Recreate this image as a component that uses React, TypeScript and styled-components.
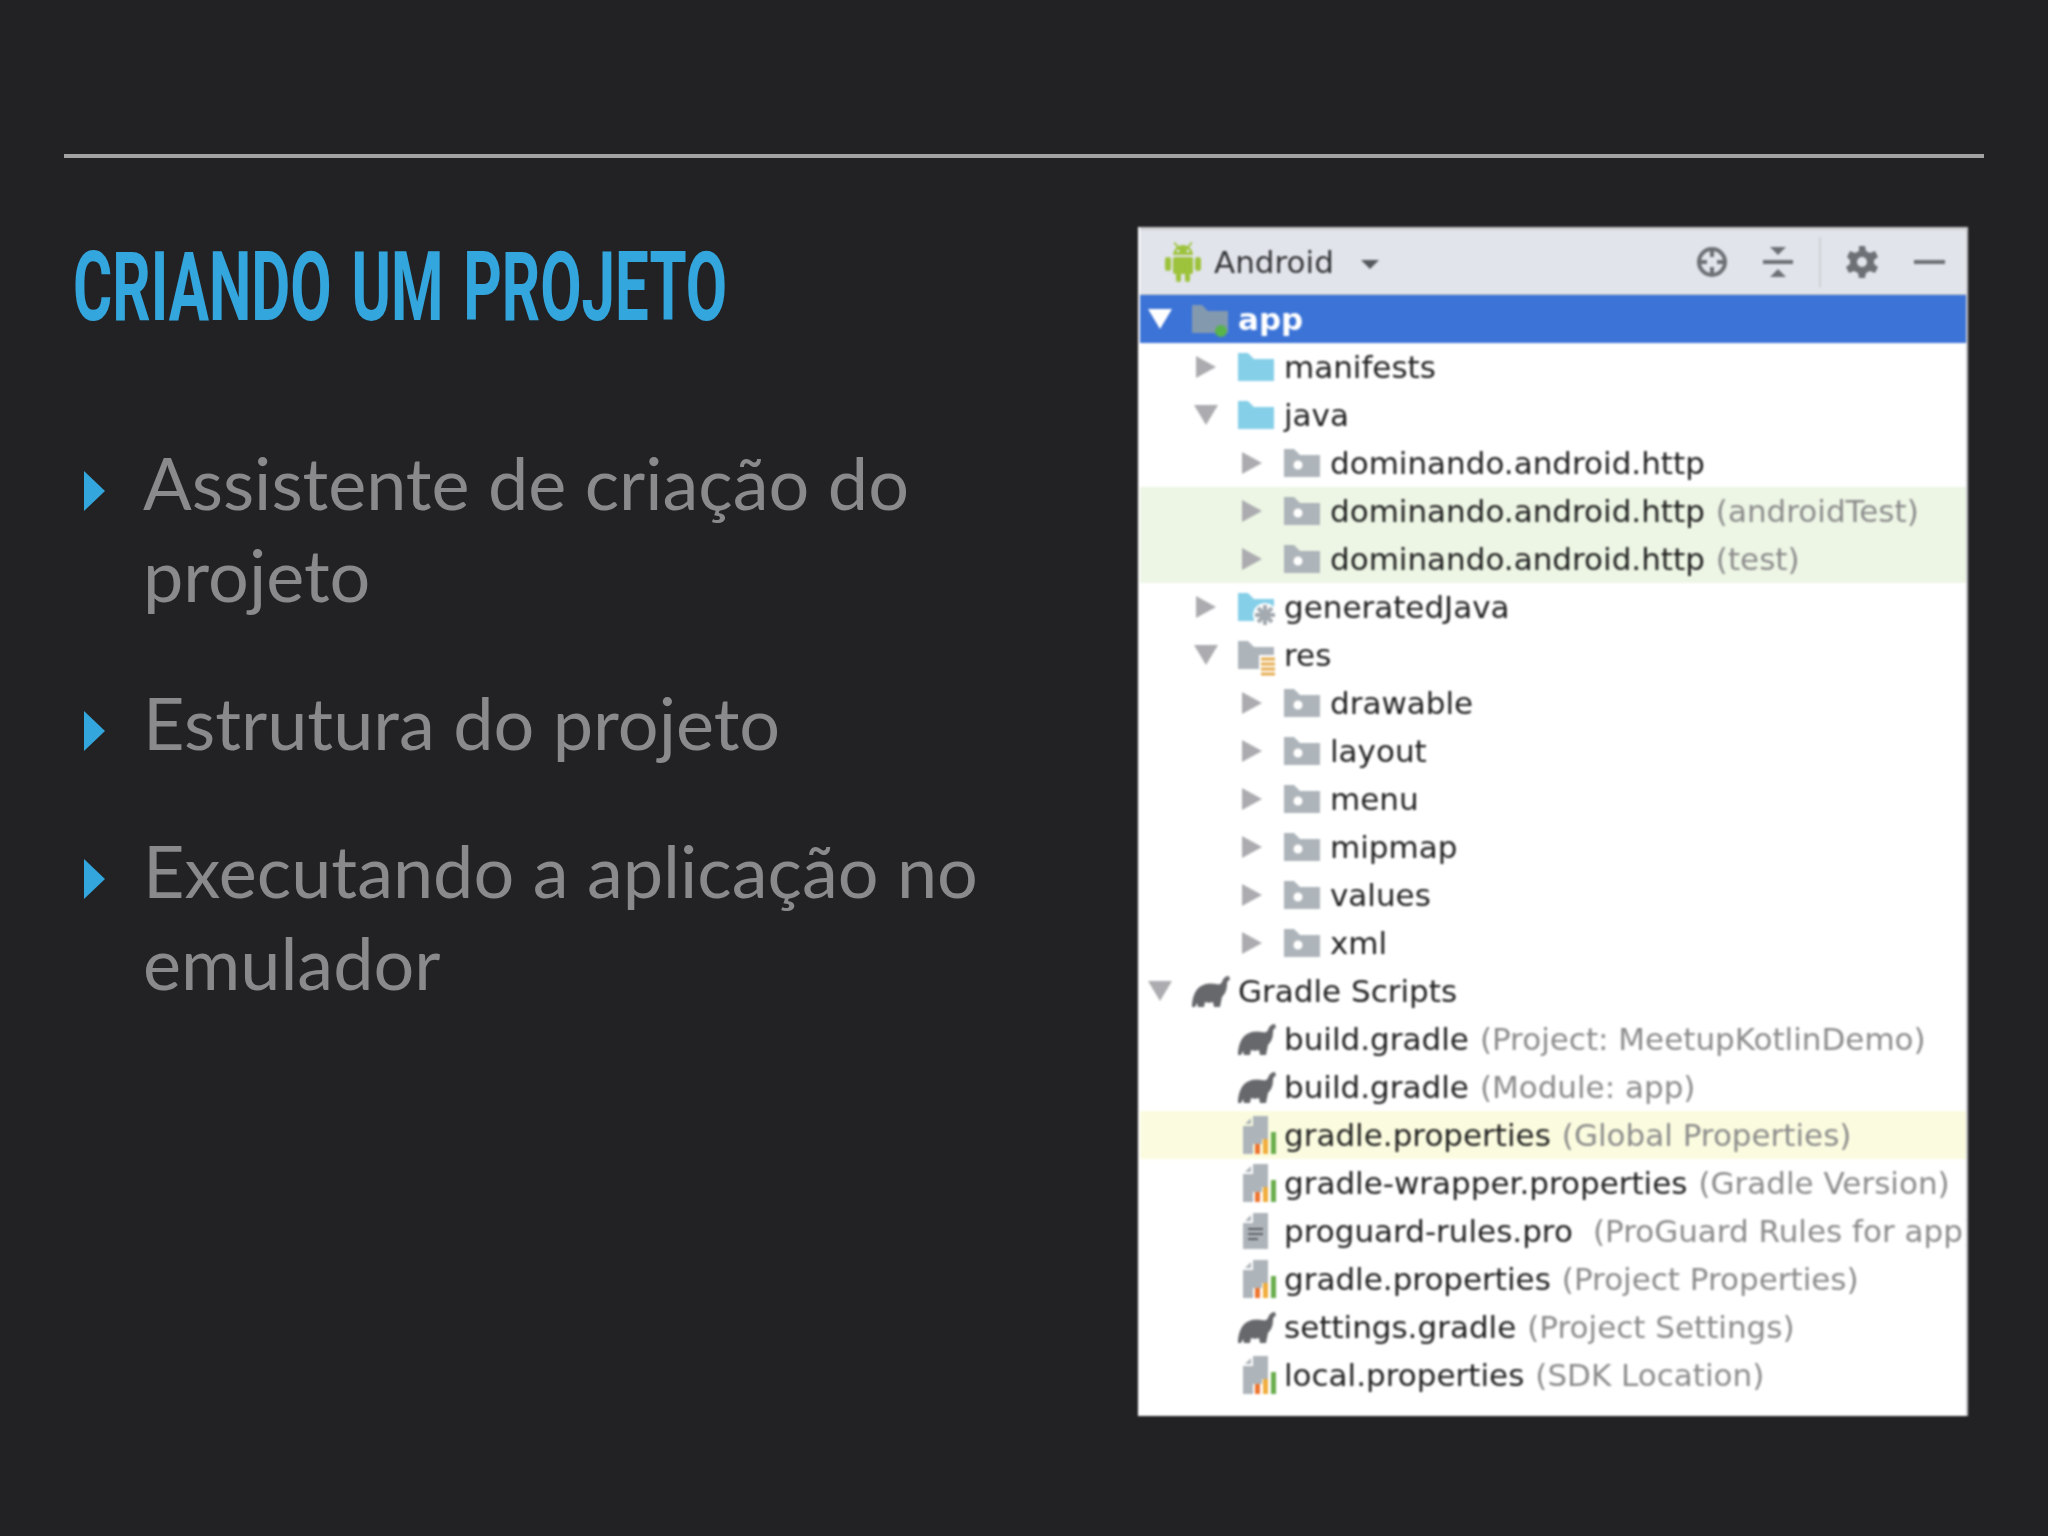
import React from 'react';
import styled, { createGlobalStyle } from 'styled-components';

const GlobalStyle = createGlobalStyle`
	html, body {
		margin: 0;
		background: #222224;
	}
`;

const Slide = styled.div`
	width: 2048px;
	height: 1536px;
	box-sizing: border-box;
	padding: 154px 64px 0;
	overflow: hidden;
	background: #222224;
`;
const Rule = styled.div`
	height: 4px;
	background: #a3a3a3;
`;
const Columns = styled.div`
	display: flex;
	justify-content: space-between;
	align-items: flex-start;
	margin-top: 69px;
	margin-right: 16px;
`;
const LeftColumn = styled.div`
	width: 1000px;
	padding-left: 9px;
`;
const Title = styled.h1`
	margin: 0;
	padding-top: 8px;
	font-family: 'Roboto', sans-serif;
	font-size: 97px;
	line-height: 104px;
	font-weight: 700;
	word-spacing: 8px;
	white-space: nowrap;
	color: #34a6de;
	transform: scaleX(0.618);
	transform-origin: left center;
`;
const List = styled.ul`
	list-style: none;
	margin: 97px 0 0;
	padding: 0;
	display: flex;
	flex-direction: column;
	gap: 56px;
`;
const Item = styled.li`
	display: flex;
	align-items: flex-start;
	font-family: 'Lato', sans-serif;
	font-size: 72px;
	line-height: 92px;
	color: #8a8a8c;
`;
const Bullet = styled.span`
	flex: none;
	width: 0;
	height: 0;
	margin: 35px 38px 0 11px;
	border-left: 21px solid #34a6de;
	border-top: 20px solid transparent;
	border-bottom: 20px solid transparent;
`;
const ItemText = styled.span`
	width: 860px;
`;

const Panel = styled.div`
	width: 830px;
	height: 1189px;
	box-sizing: border-box;
	padding-left: 2px;
	border-right: 2px solid #c8c8cc;
	background: #fff;
	overflow: hidden;
	font-family: 'DejaVu Sans', sans-serif;
	font-size: 31px;
	filter: blur(0.8px);
`;
const Toolbar = styled.div`
	display: flex;
	align-items: center;
	height: 68px;
	box-sizing: border-box;
	padding: 0 20px 0 25px;
	background: #e1e4ea;
	color: #333538;
	border-top: 3px solid #cdcdcf;
	border-bottom: 1px solid #c6c8cc;
`;
const ToolbarLabel = styled.span`
	margin-left: 13px;
`;
const Caret = styled.span`
	width: 0;
	height: 0;
	margin: 4px 0 0 27px;
	border-top: 9px solid #55585c;
	border-left: 9px solid transparent;
	border-right: 9px solid transparent;
`;
const Spacer = styled.div`
	flex: 1;
`;
const ToolIcon = styled.svg`
	flex: none;
	display: block;
	margin-left: ${(p) => p.$gap || 0}px;
`;
const Separator = styled.div`
	width: 2px;
	height: 50px;
	margin-left: 25px;
	background: #cfd1d5;
`;
const Row = styled.div`
	display: flex;
	align-items: center;
	height: 48px;
	padding-left: ${(p) => 3 + p.$level * 46}px;
	white-space: nowrap;
	overflow: hidden;
	color: ${(p) => (p.$tone === 'selected' ? '#fff' : '#222')};
	font-weight: ${(p) => (p.$tone === 'selected' ? 700 : 400)};
	background: ${(p) =>
		p.$tone === 'selected' ? '#3b73d7' : p.$tone === 'test' ? '#edf6e5' : p.$tone === 'global' ? '#fbfcdf' : 'transparent'};
`;
const ArrowSlot = styled.span`
	flex: none;
	width: 34px;
	height: 24px;
	margin-right: 15px;
	display: flex;
	align-items: center;
	justify-content: center;
`;
const ArrowRight = styled.span`
	width: 0;
	height: 0;
	border-left: 20px solid ${(p) => p.$color};
	border-top: 11px solid transparent;
	border-bottom: 11px solid transparent;
`;
const ArrowDown = styled.span`
	width: 0;
	height: 0;
	border-top: 20px solid ${(p) => p.$color};
	border-left: 12px solid transparent;
	border-right: 12px solid transparent;
`;
const IconSlot = styled.span`
	flex: none;
	width: 46px;
	height: 38px;
	display: flex;
	align-items: center;
`;
const Hint = styled.span`
	margin-left: ${(p) => p.$gap || 11}px;
	color: #8c8c8c;
`;
const Glyph = styled.svg`
	display: block;
	flex: none;
	overflow: visible;
	margin-left: ${(p) => p.$offset || 0}px;
`;

const AndroidIcon = () => (
	<Glyph width="36" height="40" viewBox="0 0 36 40">
		<g fill="#9dc33c">
			<path d="M8 13a10 10 0 0 1 20 0z" />
			<rect x="8" y="15" width="20" height="17" rx="2" />
			<rect x="0" y="15" width="6" height="14" rx="3" />
			<rect x="30" y="15" width="6" height="14" rx="3" />
			<rect x="11" y="30" width="5" height="10" rx="2" />
			<rect x="20" y="30" width="5" height="10" rx="2" />
			<path d="M10 0l4 5-1.5 1-4-5zM26 0l-4 5 1.5 1 4-5z" />
		</g>
		<circle cx="13" cy="9" r="1.5" fill="#e1e4ea" />
		<circle cx="23" cy="9" r="1.5" fill="#e1e4ea" />
	</Glyph>
);

const CrosshairIcon = () => (
	<ToolIcon width="32" height="32" viewBox="0 0 32 32">
		<circle cx="16" cy="16" r="13" fill="none" stroke="#6d7074" strokeWidth="4" />
		<path d="M16 3v8M16 21v8M3 16h8M21 16h8" stroke="#6d7074" strokeWidth="4" />
	</ToolIcon>
);
const CollapseIcon = () => (
	<ToolIcon $gap={34} width="32" height="32" viewBox="0 0 32 32">
		<path d="M8 1h16l-8 8zM8 31h16l-8-8z" fill="#6d7074" />
		<rect x="1" y="14" width="30" height="4" fill="#6d7074" />
	</ToolIcon>
);
const GearIcon = () => (
	<ToolIcon $gap={25} width="32" height="34" viewBox="0 0 32 34">
		<path
			d="M13 1h6l1 5 4 2 5-2 3 6-4 3v4l4 3-3 6-5-2-4 2-1 5h-6l-1-5-4-2-5 2-3-6 4-3v-4L1 12l3-6 5 2 4-2z"
			fill="#6d7074"
		/>
		<circle cx="16" cy="17" r="5" fill="#e1e4ea" />
	</ToolIcon>
);
const MinusIcon = () => (
	<ToolIcon $gap={36} width="32" height="6" viewBox="0 0 32 6">
		<rect y="1" width="31" height="4" fill="#6d7074" />
	</ToolIcon>
);

const FolderIcon = ({ color = '#85cfe8', children }: { color?: string; children?: React.ReactNode }) => (
	<Glyph width="36" height="28" viewBox="0 0 36 28">
		<path d="M0 0h10l6 6h20v22H0z" fill={color} />
		{children}
	</Glyph>
);

const ElephantIcon = () => (
	<Glyph width="38" height="31" viewBox="0 0 38 31">
		<path
			d="M0 31C0 24 2 14 9 10c5-3 10-3 15-2 3 1 5 0 6-2 1-3 3-6 7-6l1 4c-2 0-3 2-3 4 0 6-2 10-5 13l-2 10h-6l-1-5c-3 1-5 1-8 0l-1 5H6l-1-4-2 4z"
			fill="#66686b"
		/>
	</Glyph>
);

const PropsIcon = () => (
	<Glyph $offset={5} width="33" height="38" viewBox="0 0 33 38">
		<path d="M10 0h15v23h-6v5h-9v10H0V10h10z" fill="#adb4ba" />
		<path d="M8 2v6H2z" fill="#adb4ba" />
		<rect x="12" y="28" width="5" height="10" fill="#ee7430" />
		<rect x="20" y="23" width="5" height="15" fill="#f0ac3c" />
		<rect x="28" y="16" width="5" height="22" fill="#69ad4c" />
	</Glyph>
);

const TextFileIcon = () => (
	<Glyph $offset={5} width="25" height="36" viewBox="0 0 25 36">
		<path d="M10 0h15v36H0V10h10z" fill="#adb4ba" />
		<path d="M8 2v6H2z" fill="#adb4ba" />
		<path d="M5 16h15M5 21h15M5 26h10" stroke="#5c6066" strokeWidth="2" />
	</Glyph>
);

const icons = {
	module: (
		<FolderIcon color="#8399ae">
			<circle cx="29" cy="26" r="6" fill="#59b44c" />
		</FolderIcon>
	),
	blue: <FolderIcon />,
	generated: (
		<FolderIcon>
			<circle cx="27" cy="22" r="12" fill="#fff" />
			<path d="M27 12v20M17 22h20M20 15l14 14M34 15L20 29" stroke="#a3aab0" strokeWidth="4" />
		</FolderIcon>
	),
	res: (
		<FolderIcon color="#adb4ba">
			<rect x="21" y="14" width="17" height="20" fill="#fff" />
			<path d="M23 18h14M23 23h14M23 28h14M23 33h14" stroke="#e6ac50" strokeWidth="3" />
		</FolderIcon>
	),
	pkg: (
		<FolderIcon color="#adb4ba">
			<circle cx="14" cy="16" r="4.5" fill="#fff" />
		</FolderIcon>
	),
	gradle: <ElephantIcon />,
	props: <PropsIcon />,
	text: <TextFileIcon />,
};

type Entry = {
	level: number;
	arrow?: 'right' | 'down';
	icon: keyof typeof icons;
	name: string;
	hint?: string;
	hintGap?: number;
	tone?: 'selected' | 'test' | 'global';
};

const tree: Entry[] = [
	{ level: 0, arrow: 'down', icon: 'module', name: 'app', tone: 'selected' },
	{ level: 1, arrow: 'right', icon: 'blue', name: 'manifests' },
	{ level: 1, arrow: 'down', icon: 'blue', name: 'java' },
	{ level: 2, arrow: 'right', icon: 'pkg', name: 'dominando.android.http' },
	{ level: 2, arrow: 'right', icon: 'pkg', name: 'dominando.android.http', hint: '(androidTest)', tone: 'test' },
	{ level: 2, arrow: 'right', icon: 'pkg', name: 'dominando.android.http', hint: '(test)', tone: 'test' },
	{ level: 1, arrow: 'right', icon: 'generated', name: 'generatedJava' },
	{ level: 1, arrow: 'down', icon: 'res', name: 'res' },
	{ level: 2, arrow: 'right', icon: 'pkg', name: 'drawable' },
	{ level: 2, arrow: 'right', icon: 'pkg', name: 'layout' },
	{ level: 2, arrow: 'right', icon: 'pkg', name: 'menu' },
	{ level: 2, arrow: 'right', icon: 'pkg', name: 'mipmap' },
	{ level: 2, arrow: 'right', icon: 'pkg', name: 'values' },
	{ level: 2, arrow: 'right', icon: 'pkg', name: 'xml' },
	{ level: 0, arrow: 'down', icon: 'gradle', name: 'Gradle Scripts' },
	{ level: 1, icon: 'gradle', name: 'build.gradle', hint: '(Project: MeetupKotlinDemo)' },
	{ level: 1, icon: 'gradle', name: 'build.gradle', hint: '(Module: app)' },
	{ level: 1, icon: 'props', name: 'gradle.properties', hint: '(Global Properties)', tone: 'global' },
	{ level: 1, icon: 'props', name: 'gradle-wrapper.properties', hint: '(Gradle Version)' },
	{ level: 1, icon: 'text', name: 'proguard-rules.pro', hint: '(ProGuard Rules for app)', hintGap: 20 },
	{ level: 1, icon: 'props', name: 'gradle.properties', hint: '(Project Properties)' },
	{ level: 1, icon: 'gradle', name: 'settings.gradle', hint: '(Project Settings)' },
	{ level: 1, icon: 'props', name: 'local.properties', hint: '(SDK Location)' },
];

const TreeRow = ({ level, arrow, icon, name, hint, hintGap, tone }: Entry) => {
	const arrowColor = tone === 'selected' ? '#fff' : '#acacb0';
	return (
		<Row $level={level} $tone={tone}>
			<ArrowSlot>
				{arrow === 'right' && <ArrowRight $color={arrowColor} />}
				{arrow === 'down' && <ArrowDown $color={arrowColor} />}
			</ArrowSlot>
			<IconSlot>{icons[icon]}</IconSlot>
			{name}
			{hint && <Hint $gap={hintGap}>{hint}</Hint>}
		</Row>
	);
};

const App = () => {
	return (
		<Slide>
			<GlobalStyle />
			<Rule />
			<Columns>
				<LeftColumn>
					<Title>CRIANDO UM PROJETO</Title>
					<List>
						<Item>
							<Bullet />
							<ItemText>Assistente de criação do projeto</ItemText>
						</Item>
						<Item>
							<Bullet />
							<ItemText>Estrutura do projeto</ItemText>
						</Item>
						<Item>
							<Bullet />
							<ItemText>Executando a aplicação no emulador</ItemText>
						</Item>
					</List>
				</LeftColumn>
				<Panel>
					<Toolbar>
						<AndroidIcon />
						<ToolbarLabel>Android</ToolbarLabel>
						<Caret />
						<Spacer />
						<CrosshairIcon />
						<CollapseIcon />
						<Separator />
						<GearIcon />
						<MinusIcon />
					</Toolbar>
					{tree.map((entry, i) => (
						<TreeRow key={i} {...entry} />
					))}
				</Panel>
			</Columns>
		</Slide>
	);
};

export default App;
